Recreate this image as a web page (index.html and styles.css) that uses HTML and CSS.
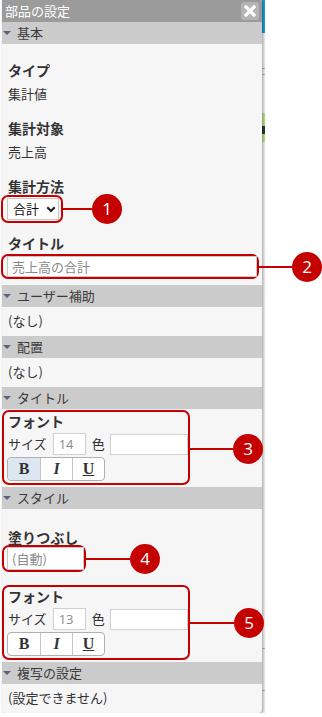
FILE: index.html
```html
<!DOCTYPE html>
<html lang="ja">
<head>
<meta charset="utf-8">
<title>部品の設定</title>
<link rel="stylesheet" href="styles.css">
</head>
<body>
<div class="stage">
  <div class="panel">
    <div class="titlebar">
      <span class="title">部品の設定</span>
      <span class="close"><svg width="12" height="12" viewBox="0 0 12 12"><path d="M2 2 L10 10 M10 2 L2 10" stroke="#fff" stroke-width="3.2" stroke-linecap="square"/></svg></span>
    </div>

    <div class="sec-head"><span class="tri"></span>基本</div>
    <div class="sec-body basic">
      <div class="field">
        <div class="label">タイプ</div>
        <div class="value">集計値</div>
      </div>
      <div class="field">
        <div class="label">集計対象</div>
        <div class="value">売上高</div>
      </div>
      <div class="field tight">
        <div class="label">集計方法</div>
        <div class="hl hl-select">
          <div class="select">合計<svg class="chev" width="10" height="7" viewBox="0 0 10 7"><path d="M1.3 1.3 L5 5 L8.7 1.3" fill="none" stroke="#222" stroke-width="2.2"/></svg></div>
          <div class="callout c1"><span class="line"></span><span class="num">1</span></div>
        </div>
      </div>
      <div class="field last">
        <div class="label">タイトル</div>
        <div class="hl hl-title">
          <div class="text-input wide">売上高の合計</div>
          <div class="callout c2"><span class="line"></span><span class="num">2</span></div>
        </div>
      </div>
    </div>

    <div class="sec-head"><span class="tri"></span>ユーザー補助</div>
    <div class="sec-body plain">(なし)</div>

    <div class="sec-head"><span class="tri"></span>配置</div>
    <div class="sec-body plain">(なし)</div>

    <div class="sec-head"><span class="tri"></span>タイトル</div>
    <div class="sec-body fontsec">
      <div class="hl hl-font">
        <div class="flabel">フォント</div>
        <div class="frow">
          <span>サイズ</span>
          <span class="num-input">14</span>
          <span class="color-label">色</span>
          <span class="color-input"></span>
        </div>
        <div class="btngroup">
          <span class="fbtn active b">B</span>
          <span class="fbtn i">I</span>
          <span class="fbtn u">U</span>
        </div>
        <div class="callout c3"><span class="line"></span><span class="num">3</span></div>
      </div>
    </div>

    <div class="sec-head"><span class="tri"></span>スタイル</div>
    <div class="sec-body style">
      <div class="label">塗りつぶし</div>
      <div class="hl hl-fill">
        <div class="text-input fill">(自動)</div>
        <div class="callout c4"><span class="line"></span><span class="num">4</span></div>
      </div>
      <div class="hl hl-font second">
        <div class="flabel">フォント</div>
        <div class="frow">
          <span>サイズ</span>
          <span class="num-input">13</span>
          <span class="color-label">色</span>
          <span class="color-input"></span>
        </div>
        <div class="btngroup">
          <span class="fbtn b">B</span>
          <span class="fbtn i">I</span>
          <span class="fbtn u">U</span>
        </div>
        <div class="callout c5"><span class="line"></span><span class="num">5</span></div>
      </div>
    </div>

    <div class="sec-head"><span class="tri"></span>複写の設定</div>
    <div class="sec-body plain">(設定できません)</div>
  </div>
  <div class="strip">
    <div class="strip-top"></div>
    <div class="strip-rest"></div>
  </div>
</div>
</body>
</html>
```

FILE: styles.css
```css
* { box-sizing: border-box; }

html, body {
  margin: 0;
  padding: 0;
  background: #ffffff;
}

body {
  font-family: "Noto Sans CJK JP", "Noto Sans", "Liberation Sans", sans-serif;
  font-size: 13px;
  color: #333333;
  line-height: 18px;
}

.stage {
  display: flex;
  align-items: flex-start;
  padding-left: 2px;
}

.panel {
  width: 260px;
  background: #f6f6f6;
  border-radius: 0 0 4px 4px;
  box-shadow: 1px 1px 3px rgba(0, 0, 0, 0.35);
  position: relative;
  z-index: 1;
}

.strip {
  width: 3px;
  display: flex;
  flex-direction: column;
}
.strip-top {
  height: 33px;
  background: #1c9ad6;
}
.strip-rest {
  height: 680px;
  background: linear-gradient(to bottom,
    #eeeeee 0, #eeeeee 35px, #b0b0b0 35px, #b0b0b0 36px, #eeeeee 36px,
    #eeeeee 41px, #b0b0b0 41px, #b0b0b0 42px, #eeeeee 42px,
    #eeeeee 80px, #b8dc8a 80px, #b8dc8a 93px, #333 93px, #333 101px, #b8dc8a 101px, #b8dc8a 109px, #eeeeee 109px,
    #eeeeee 615px, #b0b0b0 615px, #b0b0b0 616px, #eeeeee 616px,
    #eeeeee 657px, #b0b0b0 657px, #b0b0b0 658px, #eeeeee 658px);
}

/* title bar */
.titlebar {
  height: 22px;
  background: #9b9b9b;
  display: flex;
  align-items: center;
  justify-content: space-between;
  padding: 0 3px 0 3px;
}
.title {
  color: #ffffff;
  font-size: 13px;
  line-height: 22px;
}
.close {
  width: 18px;
  height: 18px;
  background: #b4b4b4;
  border-radius: 3px;
  display: flex;
  align-items: center;
  justify-content: center;
}

/* sections */
.sec-head {
  height: 22px;
  background: #cbcbcb;
  display: flex;
  align-items: center;
  font-size: 13px;
  color: #3a3a3a;
  padding-left: 1px;
}
.tri {
  width: 0;
  height: 0;
  border-left: 4px solid transparent;
  border-right: 4px solid transparent;
  border-top: 4px solid #56637a;
  margin-right: 6px;
}

.sec-body {
  padding: 0 6px;
}
.sec-body.plain {
  padding: 5px 6px 6px 6px;
}
.sec-body.basic {
  padding-top: 17px;
  padding-bottom: 6px;
}
.field {
  margin-bottom: 16px;
}
.field.tight {
  margin-bottom: 11px;
}
.field.last {
  margin-bottom: 0;
}
.label {
  font-size: 14px;
  font-weight: 700;
  line-height: 18px;
  color: #333333;
}
.value {
  margin-top: 6px;
}

/* highlight outlines */
.hl {
  position: relative;
  border: 2px solid #c40000;
  border-radius: 7px;
}
.hl-select {
  width: fit-content;
  margin-left: -7px;
  padding: 1px 2px 1px 4px;
}
.hl-title {
  margin-top: 2px;
  margin-left: -7px;
  width: 258px;
  padding: 0 0 0 4px;
}
.hl-fill {
  width: fit-content;
  margin-top: -1px;
  margin-left: -6px;
  padding: 0 0 0 3px;
}
.hl-font {
  margin-left: -6px;
  width: 188px;
  height: 75px;
  padding: 0 0 0 4px;
}
.fontsec {
  padding-top: 1px;
  padding-bottom: 2px;
}
.style {
  padding-top: 19px;
  padding-bottom: 2px;
}
.hl-font.second {
  margin-top: 13px;
}

/* controls */
.select {
  width: 52px;
  height: 22px;
  border: 1px solid #c8c8c8;
  background: #ffffff;
  display: flex;
  align-items: center;
  padding-left: 5px;
  color: #111;
  font-size: 13px;
  gap: 7px;
}
.chev { display: block; }

.text-input {
  height: 21px;
  border: 1px solid #c8c8c8;
  background: #ffffff;
  color: #8a8a8a;
  font-size: 13px;
  line-height: 19px;
  padding-left: 4px;
}
.text-input.wide { width: 250px; }
.text-input.fill { width: 77px; height: 23px; line-height: 21px; }

.flabel {
  font-size: 14px;
  font-weight: 700;
  line-height: 18px;
  color: #333;
}
.frow {
  display: flex;
  align-items: center;
  margin-top: 3px;
  height: 22px;
  font-size: 13px;
}
.num-input {
  width: 33px;
  height: 22px;
  border: 1px solid #cfcfcf;
  background: #fff;
  color: #8a8a8a;
  line-height: 20px;
  padding-left: 5px;
  margin-left: 6px;
  font-family: "Open Sans", "Noto Sans", sans-serif;
}
.color-label {
  margin-left: 6px;
}
.color-input {
  width: 78px;
  height: 21px;
  border: 1px solid #cfcfcf;
  background: #fff;
  margin-left: 5px;
}
.btngroup {
  display: flex;
  width: fit-content;
  margin-top: 2px;
  margin-left: -1px;
  border: 1px solid #b0b0b0;
  border-radius: 4px;
  overflow: hidden;
  height: 24px;
  background: #fff;
}
.fbtn {
  width: 32px;
  display: flex;
  align-items: center;
  justify-content: center;
  font-family: "Liberation Serif", "DejaVu Serif", serif;
  font-size: 16px;
  font-weight: 700;
  color: #333;
  border-left: 1px solid #c4c4c4;
}
.fbtn:first-child { border-left: none; }
.fbtn.active { background: #dde7f1; }
.fbtn.i { font-style: italic; }
.fbtn.u { text-decoration: underline; }

/* callouts */
.callout {
  position: absolute;
  left: calc(100% + 2px);
  top: 50%;
  transform: translateY(-50%);
  display: flex;
  align-items: center;
}
.callout .line {
  height: 2px;
  background: #c40000;
}
.callout .num {
  width: 30px;
  height: 30px;
  border-radius: 50%;
  background: #c40000;
  color: #ffffff;
  font-family: "Open Sans", "Liberation Sans", sans-serif;
  font-size: 17px;
  line-height: 30px;
  text-align: center;
}
.c1 .line { width: 29px; }
.c2 .line { width: 33px; }
.c3 .line { width: 43px; }
.c3 { margin-top: 1px; }
.c4 .line { width: 44px; }
.c5 .line { width: 44px; }
```
